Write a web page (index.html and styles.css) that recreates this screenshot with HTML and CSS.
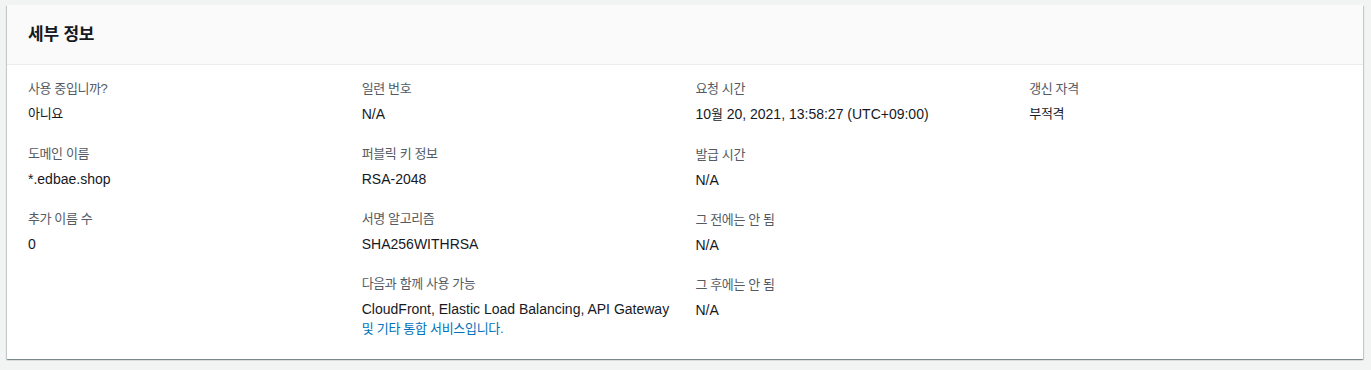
FILE: index.html
```html
<!DOCTYPE html>
<html lang="ko">
<head>
<meta charset="utf-8">
<title>세부 정보</title>
<link rel="stylesheet" href="styles.css">
</head>
<body>
<div class="page">
  <section class="card">
    <header class="card-header">
      <h2 class="card-title">세부 정보</h2>
    </header>
    <div class="card-body">
      <div class="col">
        <div class="item">
          <div class="label">사용 중입니까?</div>
          <div class="value ko">아니요</div>
        </div>
        <div class="item">
          <div class="label">도메인 이름</div>
          <div class="value">*.edbae.shop</div>
        </div>
        <div class="item">
          <div class="label">추가 이름 수</div>
          <div class="value">0</div>
        </div>
      </div>
      <div class="col">
        <div class="item">
          <div class="label">일련 번호</div>
          <div class="value">N/A</div>
        </div>
        <div class="item">
          <div class="label">퍼블릭 키 정보</div>
          <div class="value">RSA-2048</div>
        </div>
        <div class="item">
          <div class="label">서명 알고리즘</div>
          <div class="value">SHA256WITHRSA</div>
        </div>
        <div class="item">
          <div class="label">다음과 함께 사용 가능</div>
          <div class="value">CloudFront, Elastic Load Balancing, API Gateway <a class="link ko" href="#">및 기타 통합 서비스입니다.</a></div>
        </div>
      </div>
      <div class="col">
        <div class="item">
          <div class="label">요청 시간</div>
          <div class="value">10<span class="ko">월</span> 20, 2021, 13:58:27 (UTC+09:00)</div>
        </div>
        <div class="item">
          <div class="label">발급 시간</div>
          <div class="value">N/A</div>
        </div>
        <div class="item">
          <div class="label">그 전에는 안 됨</div>
          <div class="value">N/A</div>
        </div>
        <div class="item">
          <div class="label">그 후에는 안 됨</div>
          <div class="value">N/A</div>
        </div>
      </div>
      <div class="col">
        <div class="item">
          <div class="label">갱신 자격</div>
          <div class="value ko">부적격</div>
        </div>
      </div>
    </div>
  </section>
</div>
</body>
</html>
```

FILE: styles.css
```css
html, body {
  margin: 0;
  padding: 0;
  background: #f2f3f3;
}

body {
  font-family: "Liberation Sans", "Noto Sans CJK KR", sans-serif;
  font-size: 14px;
  color: #16191f;
}

.page {
  padding: 5px 8px 9px 7px;
}

.card {
  background: #ffffff;
  box-shadow: 0 1px 1px 0 rgba(0, 28, 36, 0.3), 1px 1px 1px 0 rgba(0, 28, 36, 0.15), -1px 1px 1px 0 rgba(0, 28, 36, 0.15);
}

.card-header {
  height: 59px;
  background: #fafafa;
  border-bottom: 1px solid #eaeded;
  display: flex;
  align-items: center;
  padding: 0 21px;
}

.card-title {
  margin: 0;
  font-size: 17px;
  font-weight: 700;
  letter-spacing: -0.2px;
  line-height: 20px;
  color: #16191f;
}

.card-body {
  display: grid;
  grid-template-columns: repeat(4, 1fr);
  column-gap: 20px;
  padding: 14px 20px 21px 21px;
}

.col {
  display: flex;
  flex-direction: column;
  gap: 20px;
}

.label {
  font-size: 13px;
  letter-spacing: -0.4px;
  line-height: 20px;
  color: #545b64;
}

.value {
  margin-top: 5px;
  line-height: 20px;
}

.ko {
  font-size: 13px;
  letter-spacing: -0.3px;
}

.value.ko {
  font-size: 13px;
}

.link {
  display: block;
  line-height: 19px;
  color: #0073bb;
  text-decoration: none;
}
```
